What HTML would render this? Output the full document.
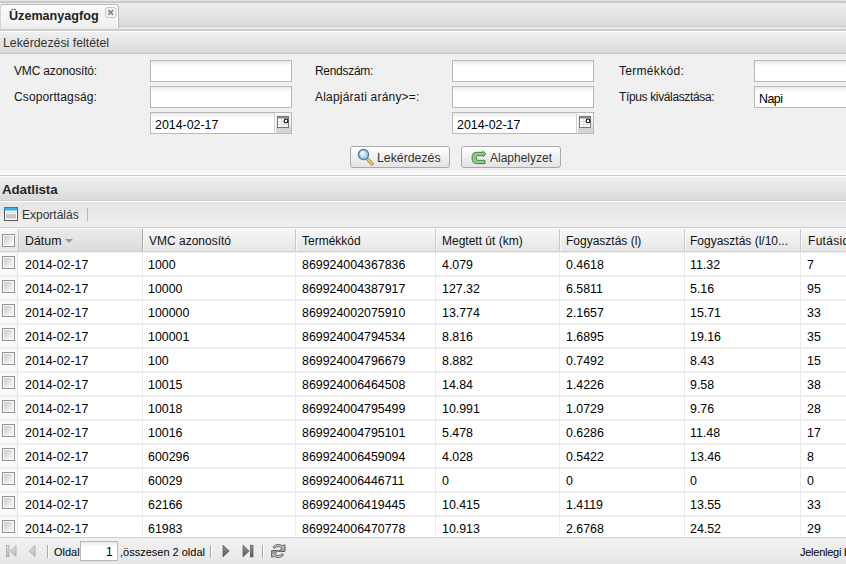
<!DOCTYPE html>
<html><head><meta charset="utf-8">
<style>
*{box-sizing:border-box;margin:0;padding:0}
html,body{width:846px;height:564px;overflow:hidden;background:#f0f0f0;font-family:"Liberation Sans",sans-serif;color:#000}
.a{position:absolute}
.t{position:absolute;white-space:nowrap;font-size:12px;line-height:14px}
/* tab strip */
#tabstrip{left:0;top:0;width:846px;height:31px;background:#e6e6e6}
#tsline{left:0;top:1px;width:846px;height:2px;background:#c9c9c9}
#tsbg{left:0;top:3px;width:846px;height:24px;background:linear-gradient(#eeeeee,#dadada)}
#tsb1{left:0;top:26px;width:846px;height:1px;background:#c8c8c8}
#tsb2{left:0;top:27px;width:846px;height:2px;background:#e9e9e9}
#tsb3{left:0;top:29px;width:846px;height:2px;background:#cdcdcd}
#tab{left:0;top:4px;width:119px;height:24px;background:linear-gradient(#fbfbfb,#f0f0f0);border:1px solid #b9b9b9;border-bottom:none;border-left-color:#d6d6d6;border-radius:3px 4px 0 0}
#tabtxt{left:9px;top:9px;font-weight:bold;font-size:12.6px;color:#222;width:90px;overflow:hidden}
#tabx{left:105px;top:7px;width:11px;height:11px;border:1px solid #c8c8c8;border-radius:3px;background:#f8f8f8}
/* panel header */
.ph{left:0;width:846px;height:23px;background:linear-gradient(#f0f0f0,#d9d9d9);border-top:1px solid #fff;border-bottom:1px solid #c5c5c5}
/* inputs */
.inp{position:absolute;height:22px;background:linear-gradient(#e9e9e9 0,#fff 5px);border:1px solid #b9b9b9}
.lbl{position:absolute;white-space:nowrap;font-size:12px;line-height:14px;color:#151515}
.trig{position:absolute;width:18px;height:22px;border:1px solid #b9b9b9;border-left:1px solid #d0d0d0;background:linear-gradient(#f4f4f4,#e9e9e9 72%,#d2d2d2 72%,#d6d6d6);box-shadow:inset 1px 1px 0 #fff}
.btn{position:absolute;height:22px;border:1px solid #a9a9a9;border-radius:3px;background:linear-gradient(#ffffff,#f0f0f0 50%,#e4e4e4)}
/* grid */
#gh{left:0;top:228px;width:846px;height:24px;background:linear-gradient(#f7f7f7,#e6e6e6);border-top:1px solid #fbfbfb;border-bottom:1px solid #d2d2d2}
.col{position:absolute;top:229px;height:22px;border-left:1px solid #d0d0d0}
.row{position:absolute;left:0;width:846px;height:24px;background:#fff;border-top:1px solid #efefef;border-bottom:1px solid #ebebeb}
.cell{position:absolute;font-size:12.4px;line-height:14px;white-space:nowrap}
.vl{position:absolute;width:1px;background:#ececec}
.cb{position:absolute;width:13px;height:13px;border:1px solid #929292;background:linear-gradient(135deg,#c4c4c4,#f6f6f6 80%);box-shadow:inset 0 0 0 1px #fafafa}
</style></head><body>
<div class="a" id="tabstrip"></div>
<div class="a" id="tsline"></div>
<div class="a" id="tsbg"></div>
<div class="a" id="tsb1"></div>
<div class="a" id="tsb2"></div>
<div class="a" id="tsb3"></div>
<div class="a" id="tab"></div>
<div class="a" style="left:117px;top:7px;width:1px;height:20px;background:#fff"></div>
<div class="t" id="tabtxt">Üzemanyagfogyasztás</div>
<div class="a" id="tabx"></div>

<div class="a ph" style="top:31px"></div>
<div class="t" style="left:3px;top:36px;font-size:12.3px;color:#333">Lekérdezési feltétel</div>

<!-- form -->
<div class="lbl" style="left:14px;top:64px;letter-spacing:-0.17px">VMC azonosító:</div>
<div class="lbl" style="left:14px;top:90px;letter-spacing:0.12px">Csoporttagság:</div>
<div class="inp" style="left:150px;top:60px;width:142px"></div>
<div class="inp" style="left:150px;top:86px;width:142px"></div>
<div class="inp" style="left:150px;top:112px;width:125px"></div>
<div class="trig" style="left:274px;top:112px"></div>
<div class="t" style="left:155px;top:118px;font-size:12.4px">2014-02-17</div>

<div class="lbl" style="left:315px;top:64px;letter-spacing:-0.3px">Rendszám:</div>
<div class="lbl" style="left:315px;top:90px;letter-spacing:0.2px">Alapjárati arány&gt;=:</div>
<div class="inp" style="left:452px;top:60px;width:142px"></div>
<div class="inp" style="left:452px;top:86px;width:142px"></div>
<div class="inp" style="left:452px;top:112px;width:125px"></div>
<div class="trig" style="left:576px;top:112px"></div>
<div class="t" style="left:457px;top:118px;font-size:12.4px">2014-02-17</div>

<div class="lbl" style="left:619px;top:64px;letter-spacing:0.3px">Termékkód:</div>
<div class="lbl" style="left:619px;top:90px;letter-spacing:-0.36px">Típus kiválasztása:</div>
<div class="inp" style="left:754px;top:60px;width:100px"></div>
<div class="inp" style="left:754px;top:86px;width:100px"></div>
<div class="t" style="left:759px;top:92px;font-size:12.4px;letter-spacing:-0.5px">Napi</div>

<div class="btn" style="left:350px;top:146px;width:100px"></div>
<div class="t" style="left:377px;top:151px;font-size:12.3px;color:#333">Lekérdezés</div>
<div class="btn" style="left:461px;top:146px;width:100px"></div>
<div class="t" style="left:490px;top:151px;font-size:12px;color:#333">Alaphelyzet</div>

<!-- separator + Adatlista header -->
<div class="a" style="left:0;top:170px;width:846px;height:5px;background:linear-gradient(#f4f4f4,#fdfdfd)"></div>
<div class="a" style="left:0;top:175px;width:846px;height:1px;background:#cccccc"></div>
<div class="a ph" style="top:176px;height:25px;border-bottom-color:#cdcdcd"></div>
<div class="t" style="left:2px;top:183px;font-weight:bold;font-size:13.4px;letter-spacing:-0.12px;color:#2a2a2a">Adatlista</div>

<!-- toolbar -->
<div class="a" style="left:0;top:201px;width:846px;height:27px;background:linear-gradient(#e4e4e4,#efefef);border-top:1px solid #fff;border-bottom:1px solid #cccccc"></div>
<div class="t" style="left:22px;top:208px;color:#333">Exportálás</div>

<!-- grid header -->
<div class="a" id="gh"></div>
<div class="a" style="left:19px;top:229px;width:123px;height:22px;background:linear-gradient(#eaeaea,#dcdcdc)"></div>

<!-- grid header cols -->
<div class="a" style="left:18px;top:229px;width:1px;height:22px;background:#c8c8c8"></div>
<div class="cb" style="left:2px;top:234px"></div>
<div class="a" style="left:142px;top:229px;width:1px;height:22px;background:#a8a8a8;box-shadow:1px 0 0 #fafafa"></div>
<div class="a" style="left:295px;top:229px;width:1px;height:22px;background:#c8c8c8;box-shadow:1px 0 0 #fafafa"></div>
<div class="a" style="left:435px;top:229px;width:1px;height:22px;background:#c8c8c8;box-shadow:1px 0 0 #fafafa"></div>
<div class="a" style="left:559px;top:229px;width:1px;height:22px;background:#c8c8c8;box-shadow:1px 0 0 #fafafa"></div>
<div class="a" style="left:684px;top:229px;width:1px;height:22px;background:#c8c8c8;box-shadow:1px 0 0 #fafafa"></div>
<div class="a" style="left:800px;top:229px;width:1px;height:22px;background:#c8c8c8;box-shadow:1px 0 0 #fafafa"></div>
<div class="t" style="left:25px;top:234px;font-size:12.4px;color:#111">Dátum</div>
<div class="a" style="left:65px;top:239px;width:0;height:0;border-left:4px solid transparent;border-right:4px solid transparent;border-top:4px solid #999"></div>
<div class="t" style="left:149px;top:234px;color:#111">VMC azonosító</div>
<div class="t" style="left:302px;top:234px;color:#111">Termékkód</div>
<div class="t" style="left:442px;top:234px;color:#111">Megtett út (km)</div>
<div class="t" style="left:566px;top:234px;color:#111">Fogyasztás (l)</div>
<div class="t" style="left:690px;top:234px;color:#111">Fogyasztás (l/10...</div>
<div class="t" style="left:808px;top:234px;color:#111;letter-spacing:0.3px">Futásidő</div>
<!-- end grid header cols -->
<!-- rows placeholder -->
<div id="rows">
<div class="row" style="top:252px"></div>
<div class="row" style="top:276px"></div>
<div class="row" style="top:300px"></div>
<div class="row" style="top:324px"></div>
<div class="row" style="top:348px"></div>
<div class="row" style="top:372px"></div>
<div class="row" style="top:396px"></div>
<div class="row" style="top:420px"></div>
<div class="row" style="top:444px"></div>
<div class="row" style="top:468px"></div>
<div class="row" style="top:492px"></div>
<div class="row" style="top:516px"></div>
<div class="a" style="left:0;top:252px;width:18px;height:285px;background:#f9f9f9;border-right:1px solid #e4e4e4"></div>
<div class="a" style="left:0;top:275px;width:18px;height:1px;background:#ebebeb"></div>
<div class="a" style="left:0;top:252px;width:18px;height:1px;background:#efefef"></div>
<div class="a" style="left:0;top:299px;width:18px;height:1px;background:#ebebeb"></div>
<div class="a" style="left:0;top:276px;width:18px;height:1px;background:#efefef"></div>
<div class="a" style="left:0;top:323px;width:18px;height:1px;background:#ebebeb"></div>
<div class="a" style="left:0;top:300px;width:18px;height:1px;background:#efefef"></div>
<div class="a" style="left:0;top:347px;width:18px;height:1px;background:#ebebeb"></div>
<div class="a" style="left:0;top:324px;width:18px;height:1px;background:#efefef"></div>
<div class="a" style="left:0;top:371px;width:18px;height:1px;background:#ebebeb"></div>
<div class="a" style="left:0;top:348px;width:18px;height:1px;background:#efefef"></div>
<div class="a" style="left:0;top:395px;width:18px;height:1px;background:#ebebeb"></div>
<div class="a" style="left:0;top:372px;width:18px;height:1px;background:#efefef"></div>
<div class="a" style="left:0;top:419px;width:18px;height:1px;background:#ebebeb"></div>
<div class="a" style="left:0;top:396px;width:18px;height:1px;background:#efefef"></div>
<div class="a" style="left:0;top:443px;width:18px;height:1px;background:#ebebeb"></div>
<div class="a" style="left:0;top:420px;width:18px;height:1px;background:#efefef"></div>
<div class="a" style="left:0;top:467px;width:18px;height:1px;background:#ebebeb"></div>
<div class="a" style="left:0;top:444px;width:18px;height:1px;background:#efefef"></div>
<div class="a" style="left:0;top:491px;width:18px;height:1px;background:#ebebeb"></div>
<div class="a" style="left:0;top:468px;width:18px;height:1px;background:#efefef"></div>
<div class="a" style="left:0;top:515px;width:18px;height:1px;background:#ebebeb"></div>
<div class="a" style="left:0;top:492px;width:18px;height:1px;background:#efefef"></div>
<div class="a" style="left:0;top:539px;width:18px;height:1px;background:#ebebeb"></div>
<div class="a" style="left:0;top:516px;width:18px;height:1px;background:#efefef"></div>
<div class="vl" style="left:142px;top:252px;height:285px"></div>
<div class="vl" style="left:295px;top:252px;height:285px"></div>
<div class="vl" style="left:435px;top:252px;height:285px"></div>
<div class="vl" style="left:559px;top:252px;height:285px"></div>
<div class="vl" style="left:684px;top:252px;height:285px"></div>
<div class="vl" style="left:800px;top:252px;height:285px"></div>
<div class="cb" style="left:2px;top:256px"></div>
<div class="cell" style="left:25px;top:258px">2014-02-17</div>
<div class="cell" style="left:148px;top:258px">1000</div>
<div class="cell" style="left:302px;top:258px">869924004367836</div>
<div class="cell" style="left:442px;top:258px">4.079</div>
<div class="cell" style="left:566px;top:258px">0.4618</div>
<div class="cell" style="left:690px;top:258px">11.32</div>
<div class="cell" style="left:807px;top:258px">7</div>
<div class="cb" style="left:2px;top:280px"></div>
<div class="cell" style="left:25px;top:282px">2014-02-17</div>
<div class="cell" style="left:148px;top:282px">10000</div>
<div class="cell" style="left:302px;top:282px">869924004387917</div>
<div class="cell" style="left:442px;top:282px">127.32</div>
<div class="cell" style="left:566px;top:282px">6.5811</div>
<div class="cell" style="left:690px;top:282px">5.16</div>
<div class="cell" style="left:807px;top:282px">95</div>
<div class="cb" style="left:2px;top:304px"></div>
<div class="cell" style="left:25px;top:306px">2014-02-17</div>
<div class="cell" style="left:148px;top:306px">100000</div>
<div class="cell" style="left:302px;top:306px">869924002075910</div>
<div class="cell" style="left:442px;top:306px">13.774</div>
<div class="cell" style="left:566px;top:306px">2.1657</div>
<div class="cell" style="left:690px;top:306px">15.71</div>
<div class="cell" style="left:807px;top:306px">33</div>
<div class="cb" style="left:2px;top:328px"></div>
<div class="cell" style="left:25px;top:330px">2014-02-17</div>
<div class="cell" style="left:148px;top:330px">100001</div>
<div class="cell" style="left:302px;top:330px">869924004794534</div>
<div class="cell" style="left:442px;top:330px">8.816</div>
<div class="cell" style="left:566px;top:330px">1.6895</div>
<div class="cell" style="left:690px;top:330px">19.16</div>
<div class="cell" style="left:807px;top:330px">35</div>
<div class="cb" style="left:2px;top:352px"></div>
<div class="cell" style="left:25px;top:354px">2014-02-17</div>
<div class="cell" style="left:148px;top:354px">100</div>
<div class="cell" style="left:302px;top:354px">869924004796679</div>
<div class="cell" style="left:442px;top:354px">8.882</div>
<div class="cell" style="left:566px;top:354px">0.7492</div>
<div class="cell" style="left:690px;top:354px">8.43</div>
<div class="cell" style="left:807px;top:354px">15</div>
<div class="cb" style="left:2px;top:376px"></div>
<div class="cell" style="left:25px;top:378px">2014-02-17</div>
<div class="cell" style="left:148px;top:378px">10015</div>
<div class="cell" style="left:302px;top:378px">869924006464508</div>
<div class="cell" style="left:442px;top:378px">14.84</div>
<div class="cell" style="left:566px;top:378px">1.4226</div>
<div class="cell" style="left:690px;top:378px">9.58</div>
<div class="cell" style="left:807px;top:378px">38</div>
<div class="cb" style="left:2px;top:400px"></div>
<div class="cell" style="left:25px;top:402px">2014-02-17</div>
<div class="cell" style="left:148px;top:402px">10018</div>
<div class="cell" style="left:302px;top:402px">869924004795499</div>
<div class="cell" style="left:442px;top:402px">10.991</div>
<div class="cell" style="left:566px;top:402px">1.0729</div>
<div class="cell" style="left:690px;top:402px">9.76</div>
<div class="cell" style="left:807px;top:402px">28</div>
<div class="cb" style="left:2px;top:424px"></div>
<div class="cell" style="left:25px;top:426px">2014-02-17</div>
<div class="cell" style="left:148px;top:426px">10016</div>
<div class="cell" style="left:302px;top:426px">869924004795101</div>
<div class="cell" style="left:442px;top:426px">5.478</div>
<div class="cell" style="left:566px;top:426px">0.6286</div>
<div class="cell" style="left:690px;top:426px">11.48</div>
<div class="cell" style="left:807px;top:426px">17</div>
<div class="cb" style="left:2px;top:448px"></div>
<div class="cell" style="left:25px;top:450px">2014-02-17</div>
<div class="cell" style="left:148px;top:450px">600296</div>
<div class="cell" style="left:302px;top:450px">869924006459094</div>
<div class="cell" style="left:442px;top:450px">4.028</div>
<div class="cell" style="left:566px;top:450px">0.5422</div>
<div class="cell" style="left:690px;top:450px">13.46</div>
<div class="cell" style="left:807px;top:450px">8</div>
<div class="cb" style="left:2px;top:472px"></div>
<div class="cell" style="left:25px;top:474px">2014-02-17</div>
<div class="cell" style="left:148px;top:474px">60029</div>
<div class="cell" style="left:302px;top:474px">869924006446711</div>
<div class="cell" style="left:442px;top:474px">0</div>
<div class="cell" style="left:566px;top:474px">0</div>
<div class="cell" style="left:690px;top:474px">0</div>
<div class="cell" style="left:807px;top:474px">0</div>
<div class="cb" style="left:2px;top:496px"></div>
<div class="cell" style="left:25px;top:498px">2014-02-17</div>
<div class="cell" style="left:148px;top:498px">62166</div>
<div class="cell" style="left:302px;top:498px">869924006419445</div>
<div class="cell" style="left:442px;top:498px">10.415</div>
<div class="cell" style="left:566px;top:498px">1.4119</div>
<div class="cell" style="left:690px;top:498px">13.55</div>
<div class="cell" style="left:807px;top:498px">33</div>
<div class="cb" style="left:2px;top:520px"></div>
<div class="cell" style="left:25px;top:522px">2014-02-17</div>
<div class="cell" style="left:148px;top:522px">61983</div>
<div class="cell" style="left:302px;top:522px">869924006470778</div>
<div class="cell" style="left:442px;top:522px">10.913</div>
<div class="cell" style="left:566px;top:522px">2.6768</div>
<div class="cell" style="left:690px;top:522px">24.52</div>
<div class="cell" style="left:807px;top:522px">29</div>
</div>
<!-- end rows -->

<!-- paging toolbar -->
<div class="a" style="left:0;top:537px;width:846px;height:27px;background:linear-gradient(#f2f2f2,#e6e6e6);border-top:1px solid #cfcfcf"></div>
<div class="t" style="left:54px;top:545px;font-size:11px">Oldal</div>
<div class="inp" style="left:80px;top:541px;width:38px;height:20px"></div>
<div class="t" style="left:106px;top:545px;font-size:12px">1</div>
<div class="t" style="left:120px;top:545px;font-size:11px">,összesen 2 oldal</div>
<div class="t" style="left:800px;top:545px;font-size:11px;letter-spacing:-0.25px">Jelenlegi bejegyzések</div>
<!-- icons -->
<svg class="a" style="left:105px;top:7px" width="12" height="11" viewBox="0 0 12 11"><rect x="0.5" y="0.5" width="10.5" height="10" rx="2.5" fill="#fafafa" stroke="#c4c4c4"/><path d="M3.3 3L8.2 7.9M8.2 3L3.3 7.9" stroke="#8a8a8a" stroke-width="1.8"/></svg>
<svg class="a" style="left:277px;top:116px" width="12" height="12" viewBox="0 0 12 12"><rect x="0.5" y="0.5" width="11" height="11" fill="#fff" stroke="#777"/><rect x="1" y="1" width="10" height="1.5" fill="#8a8a8a"/><path d="M4.5 3v8M7.5 3v8M1 5.5h10M1 8.5h10" stroke="#e0e0e0"/><circle cx="9" cy="4.9" r="1.9" fill="#fff" stroke="#000" stroke-width="1.1"/></svg>
<svg class="a" style="left:579px;top:116px" width="12" height="12" viewBox="0 0 12 12"><rect x="0.5" y="0.5" width="11" height="11" fill="#fff" stroke="#777"/><rect x="1" y="1" width="10" height="1.5" fill="#8a8a8a"/><path d="M4.5 3v8M7.5 3v8M1 5.5h10M1 8.5h10" stroke="#e0e0e0"/><circle cx="9" cy="4.9" r="1.9" fill="#fff" stroke="#000" stroke-width="1.1"/></svg>
<svg class="a" style="left:357px;top:148px" width="17" height="18" viewBox="0 0 17 18"><path d="M10.8 11.3L15 15.8" stroke="#b0902a" stroke-width="3.4" stroke-linecap="round"/><path d="M10.8 11.3L15 15.8" stroke="#ead27a" stroke-width="1.5" stroke-linecap="round"/><circle cx="6.5" cy="6.5" r="5" fill="#b4d8f4" stroke="#5d7c9c" stroke-width="1.5"/><circle cx="5.6" cy="5.4" r="2.4" fill="#e4f4ff"/></svg>
<svg class="a" style="left:470px;top:149px" width="18" height="17" viewBox="0 0 18 17"><path d="M13 2.3L15.9 5L13 7.7V6.6H7.6Q6.3 6.8 6.3 9Q6.3 11.3 7.6 11.3H15V14.6H6.5Q2 14.5 2 9Q2 3.3 6.5 3.3H13Z" fill="#8ccc8c" stroke="#2f7d2f" stroke-width="0.9" stroke-linejoin="round"/></svg>
<svg class="a" style="left:4px;top:207px" width="14" height="14" viewBox="0 0 14 14"><rect x="0.5" y="0.5" width="13" height="13" fill="#fff" stroke="#555"/><rect x="0" y="0" width="14" height="3.6" fill="#1a86c8"/><rect x="1" y="1" width="12" height="1.8" fill="#3fb0ea"/><rect x="1" y="3.6" width="12" height="1.4" fill="#dff6ff"/><rect x="2" y="5.2" width="10" height="1" fill="#dcdcdc"/><rect x="2" y="7" width="10" height="4.6" fill="#c6c6c6"/></svg>
<div class="a" style="left:87px;top:208px;width:1px;height:13px;background:#b8b8b8"></div>
<!-- paging icons -->
<svg class="a" style="left:5px;top:544px" width="13" height="14" viewBox="0 0 13 14"><defs><linearGradient id="pg1" x1="0" x2="0" y1="0" y2="1"><stop offset="0" stop-color="#e6e6e6"/><stop offset="1" stop-color="#b4b4b4"/></linearGradient></defs><rect x="1.4" y="1.4" width="2.6" height="11.4" fill="url(#pg1)" stroke="#a8a8a8" stroke-width="0.8"/><path d="M11 1.5V12.5L5.3 7Z" fill="url(#pg1)" stroke="#a4a4a4" stroke-width="0.8"/></svg>
<svg class="a" style="left:27px;top:544px" width="10" height="14" viewBox="0 0 10 14"><path d="M8 1.5V12.5L2.3 7Z" fill="url(#pg1)" stroke="#a4a4a4" stroke-width="0.8"/></svg>
<div class="a" style="left:47px;top:545px;width:1px;height:13px;background:#a8a8a8;box-shadow:1px 0 0 #fff"></div>
<div class="a" style="left:210px;top:545px;width:1px;height:13px;background:#a8a8a8;box-shadow:1px 0 0 #fff"></div>
<svg class="a" style="left:221px;top:544px" width="10" height="14" viewBox="0 0 10 14"><defs><linearGradient id="pg2" x1="0" x2="0" y1="0" y2="1"><stop offset="0" stop-color="#9a9a9a"/><stop offset="1" stop-color="#555"/></linearGradient></defs><path d="M2 1.2V12.8L8.2 7Z" fill="url(#pg2)" stroke="#5a5a5a" stroke-width="0.7"/></svg>
<svg class="a" style="left:241px;top:544px" width="14" height="14" viewBox="0 0 14 14"><path d="M2 1.2V12.8L8.2 7Z" fill="url(#pg2)" stroke="#5a5a5a" stroke-width="0.7"/><rect x="9.4" y="1.3" width="2.6" height="11.6" fill="url(#pg2)" stroke="#5a5a5a" stroke-width="0.7"/></svg>
<div class="a" style="left:262px;top:545px;width:1px;height:13px;background:#a8a8a8;box-shadow:1px 0 0 #fff"></div>
<svg class="a" style="left:268px;top:541px" width="22" height="20" viewBox="0 0 22 20"><defs><linearGradient id="rf" x1="0" x2="0" y1="0" y2="1"><stop offset="0" stop-color="#cfcfcf"/><stop offset="1" stop-color="#8c8c8c"/></linearGradient></defs><g fill="url(#rf)" stroke="#5c5c5c" stroke-width="0.9" stroke-linejoin="miter"><path id="rfa" d="M4.9 6.2A6.6 6.6 0 0 1 14.1 4.6L17 3.8V10.5H10.3L13.79 7.21A4.6 4.6 0 0 0 6.53 7.36Z"/><use href="#rfa" transform="rotate(180 10.3 10)"/></g></svg>
<!-- end icons -->
</body></html>
